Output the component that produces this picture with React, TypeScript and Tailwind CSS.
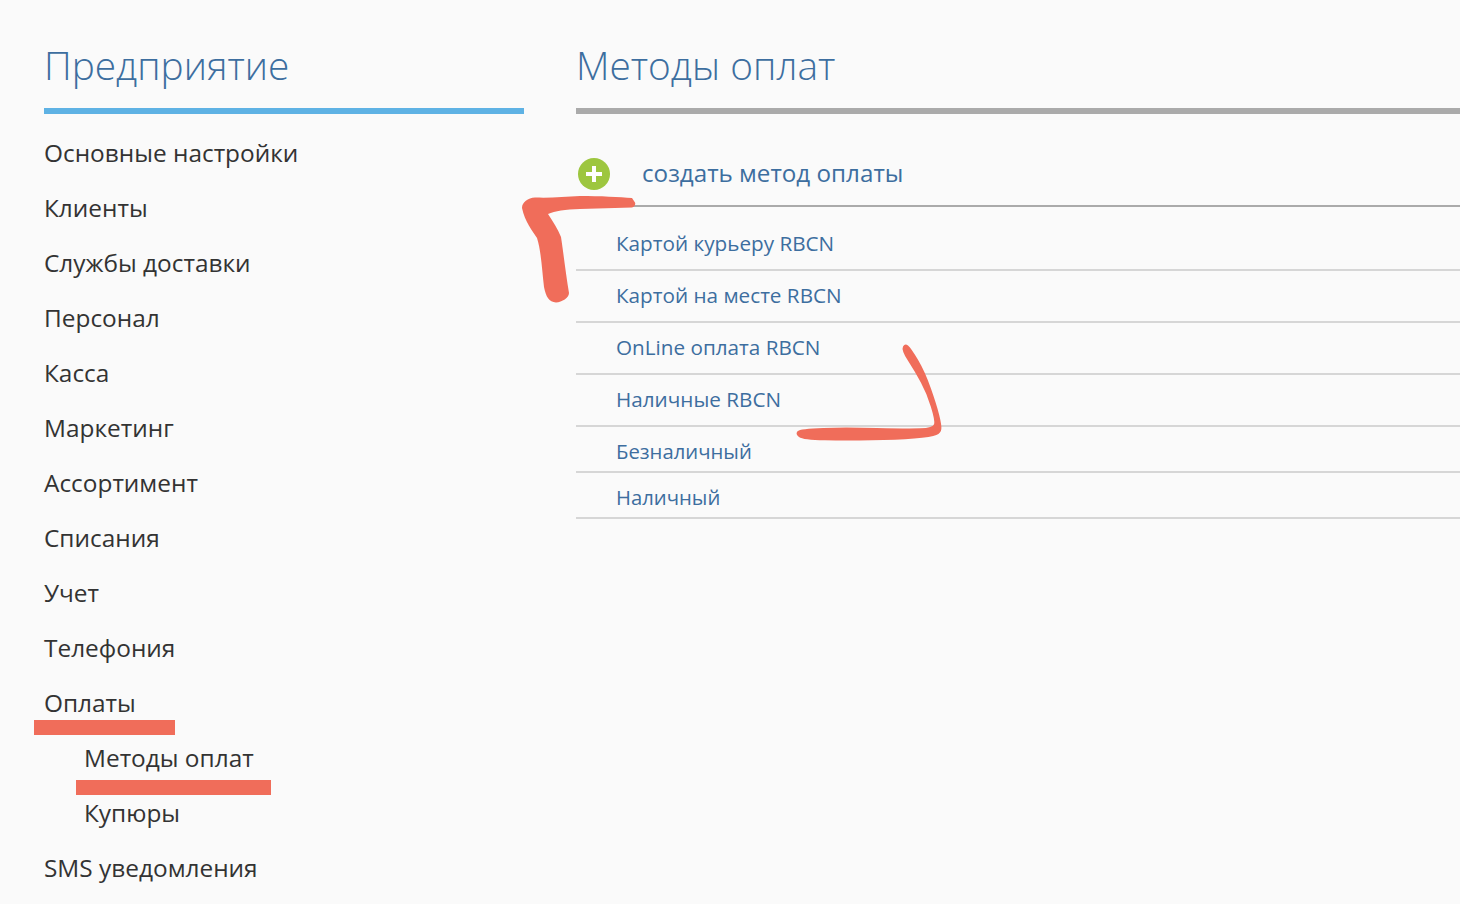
const menu = [
  { label: "Основные настройки" },
  { label: "Клиенты" },
  { label: "Службы доставки" },
  { label: "Персонал" },
  { label: "Касса" },
  { label: "Маркетинг" },
  { label: "Ассортимент" },
  { label: "Списания" },
  { label: "Учет" },
  { label: "Телефония" },
  { label: "Оплаты" },
  { label: "Методы оплат", sub: true },
  { label: "Купюры", sub: true },
  { label: "SMS уведомления" },
];

const methods = [
  { label: "Картой курьеру RBCN", cls: "h-[64px] pt-[12px] text-[20.700px]" },
  { label: "Картой на месте RBCN", cls: "h-[52px] text-[20.700px]" },
  { label: "OnLine оплата RBCN", cls: "h-[52px] text-[20.700px]" },
  { label: "Наличные RBCN", cls: "h-[52px] text-[20.700px]" },
  { label: "Безналичный", cls: "h-[46px] pt-[5px] text-[20.300px]" },
  { label: "Наличный", cls: "h-[46px] pt-[5px] text-[20.300px]" },
];

// контур мазка: сглаживаем точки через середины отрезков
const smooth = (pts: number[][]) => {
  const mid = (a: number[], b: number[]) => `${(a[0] + b[0]) / 2} ${(a[1] + b[1]) / 2}`;
  let d = `M${mid(pts[pts.length - 1], pts[0])}`;
  pts.forEach((p, i) => {
    d += `Q${p[0]} ${p[1]} ${mid(p, pts[(i + 1) % pts.length])}`;
  });
  return d + "Z";
};

const hook = [
  [905, 343], [911, 348], [925, 371.700], [936.700, 405], [941.700, 425], [941, 433], [931.700, 437],
  [896.700, 440], [846.700, 440.700], [803, 440], [795, 434], [800, 428.500], [846.700, 427.300],
  [906.700, 428.700], [933.300, 428], [935, 420], [926.700, 393.300], [915, 371.700], [901, 350],
];

function Annotations() {
  return (
    <svg className="absolute left-0 top-0 pointer-events-none" width="1460" height="904" fill="none">
      <path
        d="M635 202.500C636 205 634 207 632 207.500L580 209C565 209.500 555 211 548 214C553 222 558 229 561 237C563 250 566 275 569 293C569 298 562 302 556 302.500C549 302 546 297 544 287C542 270 541 250 537 238C532 230 525 222 522 208C522 202 528 198 535 197.500C550 198 565 197 580 196C600 196 620 197 632 198Z"
        fill="#f06d5a"
      />
      <path d={smooth(hook)} fill="#f06d5a" />
    </svg>
  );
}

export default function App() {
  return (
    <div className="relative h-[904px] overflow-hidden bg-[#fafafa] font-['Open_Sans','Noto_Sans',sans-serif]">
      <div className="flex gap-[52px] pl-[44px]">
        <aside className="w-[480px] shrink-0">
          <h1 className="h-[114px] border-b-[6px] border-[#5eb2e4] pt-[37px] text-[38.800px] leading-[56px] font-light text-[#3d6e9f]">
            Предприятие
          </h1>
          <ul className="mt-[11px]">
            {menu.map((m) => (
              <li
                key={m.label}
                className={`h-[55px] text-[24.400px] leading-[55px] text-[#333333] ${m.sub ? "pl-[40px]" : ""}`}
              >
                {m.label}
              </li>
            ))}
          </ul>
        </aside>
        <main className="min-w-0 flex-1">
          <h2 className="h-[114px] border-b-[6px] border-[#aaaaaa] pt-[37px] text-[38.800px] leading-[56px] font-light text-[#3d6e9f]">
            Методы оплат
          </h2>
          <div className="flex h-[93px] items-center border-b-2 border-[#aaaaaa] pt-[28px]">
            <span className="ml-[2px] flex h-[32px] w-[32px] items-center justify-center rounded-full bg-[#9dc63f]">
              <svg width="18" height="18" viewBox="0 0 18 18">
                <path d="M9 1v16M1 9h16" stroke="#ffffff" strokeWidth="4" />
              </svg>
            </span>
            <span className="ml-[32px] text-[24.200px] text-[#3d6e9f]">создать метод оплаты</span>
          </div>
          {methods.map((r) => (
            <div
              key={r.label}
              className={`flex items-center border-b-2 border-[#d6d6d6] pl-[40px] text-[#3d6e9f] ${r.cls}`}
            >
              {r.label}
            </div>
          ))}
        </main>
      </div>
      {/* пометки поверх скриншота */}
      <div className="absolute left-[34px] top-[720px] h-[15px] w-[141px] bg-[#f06d5a]" />
      <div className="absolute left-[76px] top-[780px] h-[15px] w-[195px] bg-[#f06d5a]" />
      <Annotations />
    </div>
  );
}
